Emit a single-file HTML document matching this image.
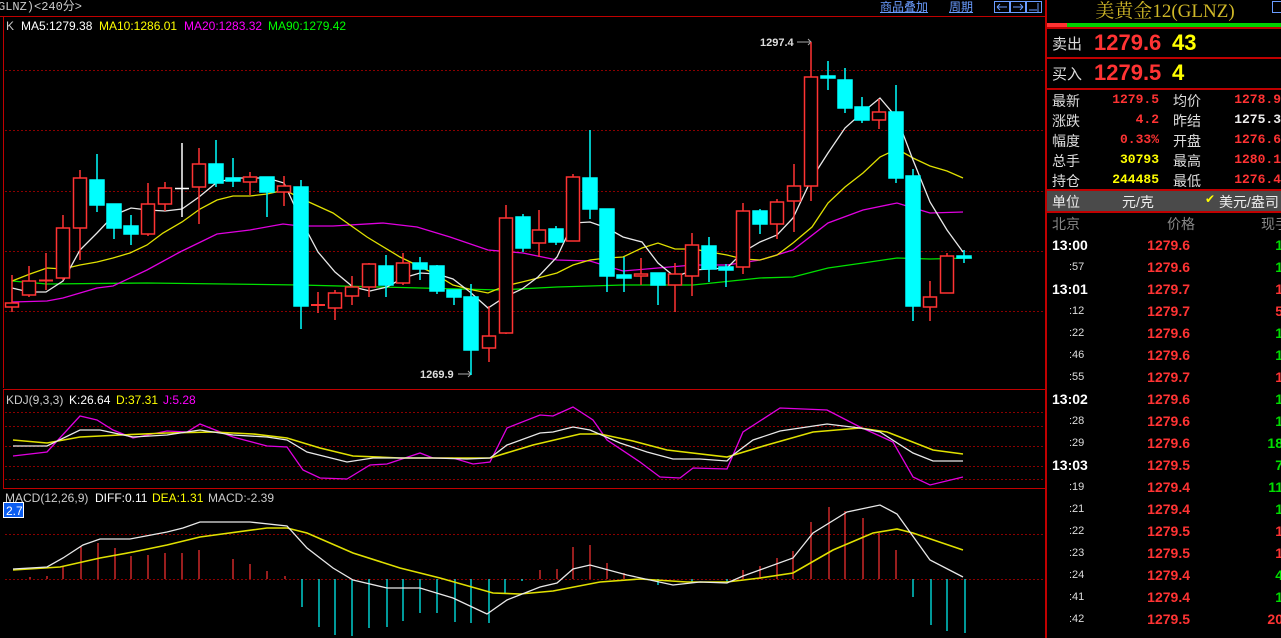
<!DOCTYPE html>
<html><head><meta charset="utf-8"><style>
html,body{margin:0;padding:0;background:#000;width:1281px;height:638px;overflow:hidden;font-family:"Liberation Sans","Noto Sans CJK SC",sans-serif}
.a{position:absolute;white-space:nowrap}
#rp{position:absolute;left:1045px;top:0;width:236px;height:638px;border-left:2px solid #c00000;box-sizing:border-box}
.hl{position:absolute;left:0;width:236px;height:2px;background:#c00000}
.lb{position:absolute;left:5px;color:#ddd;font-size:14px}
.v{position:absolute;text-align:right;font-family:"Liberation Mono",monospace;font-weight:bold;font-size:13px}
.tr{position:absolute;left:0;width:236px;height:22px}
</style></head><body>
<div class="a" style="left:-2px;top:0;color:#ccc;font-size:12px;line-height:15px;font-family:'Liberation Mono','Noto Sans CJK SC',monospace">GLNZ)&lt;240分&gt;</div>
<div class="a" style="left:880px;top:0;color:#6a9cff;font-size:12px;line-height:15px;text-decoration:underline">商品叠加</div>
<div class="a" style="left:949px;top:0;color:#6a9cff;font-size:12px;line-height:15px;text-decoration:underline">周期</div>
<svg class="a" style="left:994px;top:0" width="50" height="14">
<rect x="0.5" y="1.5" width="15" height="11" fill="none" stroke="#6a9cff"/><path d="M3 7h10M3 7l3-3M3 7l3 3" stroke="#6a9cff" fill="none"/>
<rect x="16.5" y="1.5" width="15" height="11" fill="none" stroke="#6a9cff"/><path d="M19 7h10M29 7l-3-3M29 7l-3 3" stroke="#6a9cff" fill="none"/>
<rect x="32.5" y="1.5" width="15" height="11" fill="none" stroke="#6a9cff"/><path d="M35 10h8M44 3v9" stroke="#6a9cff" fill="none"/>
</svg>
<svg class="a" style="left:0;top:0" width="1045" height="638" font-family="Liberation Sans, sans-serif" font-size="12">
<line x1="0" y1="16.5" x2="1045" y2="16.5" stroke="#c00000"/>
<line x1="3.5" y1="17" x2="3.5" y2="388" stroke="#c00000"/>
<g stroke="#8a0000" stroke-dasharray="2,2">
<line x1="5" y1="70.5" x2="1045" y2="70.5"/><line x1="5" y1="130.5" x2="1045" y2="130.5"/><line x1="5" y1="191.5" x2="1045" y2="191.5"/><line x1="5" y1="251.5" x2="1045" y2="251.5"/><line x1="5" y1="311.5" x2="1045" y2="311.5"/>
<line x1="5" y1="412.5" x2="1045" y2="412.5"/><line x1="5" y1="426.5" x2="1045" y2="426.5"/><line x1="5" y1="446.5" x2="1045" y2="446.5"/><line x1="5" y1="466.5" x2="1045" y2="466.5"/><line x1="5" y1="479.5" x2="1045" y2="479.5"/>
<line x1="5" y1="534.5" x2="1045" y2="534.5"/><line x1="5" y1="579.5" x2="1045" y2="579.5"/>
</g>
<rect x="3.5" y="389.5" width="1042" height="99" fill="none" stroke="#c00000"/>
<text x="6" y="30" fill="#ccc">K</text>
<text x="21" y="30" fill="#fff">MA5:1279.38</text>
<text x="99" y="30" fill="#ff0">MA10:1286.01</text>
<text x="184" y="30" fill="#f0f">MA20:1283.32</text>
<text x="268" y="30" fill="#0f0">MA90:1279.42</text>
<text x="6" y="404" fill="#ccc">KDJ(9,3,3)</text>
<text x="69" y="404" fill="#fff">K:26.64</text>
<text x="116" y="404" fill="#ff0">D:37.31</text>
<text x="163" y="404" fill="#f0f">J:5.28</text>
<text x="5" y="502" fill="#ccc">MACD(12,26,9)</text>
<text x="95" y="502" fill="#fff">DIFF:0.11</text>
<text x="152" y="502" fill="#ff0">DEA:1.31</text>
<text x="208" y="502" fill="#ccc">MACD:-2.39</text>
<rect x="3.5" y="502.5" width="20" height="15" fill="#0a5cf0" stroke="#fff"/>
<text x="6" y="515" fill="#fff">2.7</text>
<text x="760" y="46" fill="#ddd" font-weight="bold" font-size="11">1297.4</text><path d="M797 42h14M808 39l3 3-3 3" stroke="#aaa" fill="none"/>
<text x="420" y="378" fill="#ddd" font-weight="bold" font-size="11">1269.9</text><path d="M458 374h13M468 371l3 3-3 3" stroke="#aaa" fill="none"/>
<g stroke-width="1.3" fill="none">
<polyline stroke="#00e000" points="12,281 47,284 147,283 300,285 500,290 557,287 623,285 693,285 760,278 793,277 828,268 863,263 897,258 930,259 972,258"/>
<polyline stroke="#e000e0" points="12,302 47,301 63,298 97,288 113,286 147,270 180,252 217,234 250,230 283,224 300,226 333,226 383,223 417,227 450,237 488,250 523,253 557,260 590,261 623,271 658,268 693,265 727,265 760,260 793,250 828,223 863,210 897,203 930,213 963,212"/>
<polyline stroke="#e0e000" points="12,281 30,274 47,268 63,269 80,265 97,262 113,258 130,253 147,245 163,233 182,222 200,209 217,200 233,196 250,196 267,194 285,190 300,198 333,213 367,237 400,257 433,273 453,285 473,290 488,293 505,286 522,282 538,278 557,273 573,265 590,260 607,258 623,257 642,248 658,243 675,249 693,249 710,252 727,255 743,259 760,260 777,255 793,243 812,227 828,203 845,187 863,173 880,157 897,149 913,158 930,166 947,171 963,178"/>
<polyline stroke="#e8e8e8" points="12,288 29,292 46,292 63,281 80,250 97,233 114,215 131,208 148,210 165,211 182,209 199,197 216,183 233,178 250,178 267,178 284,183 301,220 318,252 335,272 353,287 370,291 387,287 403,278 420,273 437,274 453,279 470,292 488,308 505,297 522,289 538,277 557,257 573,223 590,222 607,228 623,237 642,242 658,263 675,277 693,270 710,269 727,268 743,252 760,242 777,235 793,218 812,178 828,153 845,128 863,112 880,98 897,118 913,160 930,202 947,230 963,252"/>
</g>
<g stroke="#ff3333" stroke-width="1.5" fill="#000">
<line x1="12" y1="275" x2="12" y2="312"/><rect x="5.5" y="303" width="13" height="4"/>
<line x1="29" y1="266" x2="29" y2="297"/><rect x="22.5" y="281" width="13" height="14"/>
<line x1="46" y1="253" x2="46" y2="290"/><line x1="39" y1="280.5" x2="53" y2="280.5" stroke-width="2"/>
<line x1="63" y1="215" x2="63" y2="280"/><rect x="56.5" y="228" width="13" height="50"/>
<line x1="80" y1="170" x2="80" y2="260"/><rect x="73.5" y="178" width="13" height="50"/>
<line x1="148" y1="183" x2="148" y2="236"/><rect x="141.5" y="204" width="13" height="30"/>
<line x1="165" y1="182" x2="165" y2="211"/><rect x="158.5" y="188" width="13" height="16"/>
<line x1="199" y1="148" x2="199" y2="224"/><rect x="192.5" y="164" width="13" height="23"/>
<line x1="250" y1="172" x2="250" y2="195"/><rect x="243.5" y="177" width="13" height="5"/>
<line x1="284" y1="176" x2="284" y2="206"/><rect x="277.5" y="186" width="13" height="6"/>
<line x1="318" y1="292" x2="318" y2="313"/><line x1="311" y1="305" x2="325" y2="305" stroke-width="2"/>
<line x1="335" y1="290" x2="335" y2="320"/><rect x="328.5" y="293" width="13" height="15"/>
<line x1="352" y1="276" x2="352" y2="305"/><rect x="345.5" y="287" width="13" height="9"/>
<line x1="369" y1="263" x2="369" y2="297"/><rect x="362.5" y="264" width="13" height="23"/>
<line x1="403" y1="253" x2="403" y2="285"/><rect x="396.5" y="263" width="13" height="20"/>
<line x1="489" y1="306" x2="489" y2="362"/><rect x="482.5" y="336" width="13" height="12"/>
<line x1="506" y1="205" x2="506" y2="334"/><rect x="499.5" y="218" width="13" height="115"/>
<line x1="539" y1="210" x2="539" y2="257"/><rect x="532.5" y="230" width="13" height="13"/>
<line x1="573" y1="174" x2="573" y2="241"/><rect x="566.5" y="177" width="13" height="64"/>
<line x1="641" y1="258" x2="641" y2="285"/><rect x="634.5" y="274" width="13" height="2"/>
<line x1="675" y1="263" x2="675" y2="312"/><rect x="668.5" y="274" width="13" height="11"/>
<line x1="692" y1="233" x2="692" y2="296"/><rect x="685.5" y="245" width="13" height="31"/>
<line x1="743" y1="203" x2="743" y2="274"/><rect x="736.5" y="211" width="13" height="56"/>
<line x1="777" y1="199" x2="777" y2="239"/><rect x="770.5" y="202" width="13" height="22"/>
<line x1="794" y1="164" x2="794" y2="232"/><rect x="787.5" y="186" width="13" height="15"/>
<line x1="811" y1="42" x2="811" y2="201"/><rect x="804.5" y="77" width="13" height="109"/>
<line x1="879" y1="99" x2="879" y2="129"/><rect x="872.5" y="112" width="13" height="8"/>
<line x1="930" y1="281" x2="930" y2="321"/><rect x="923.5" y="297" width="13" height="10"/>
<line x1="947" y1="253" x2="947" y2="293"/><rect x="940.5" y="256" width="13" height="37"/>
</g>
<g stroke="#fff" stroke-width="1.5"><line x1="182" y1="143" x2="182" y2="217"/><line x1="175" y1="188.5" x2="189" y2="188.5"/></g>
<g stroke="#00ffff" stroke-width="1.5" fill="#00ffff">
<line x1="97" y1="154" x2="97" y2="212"/><rect x="90" y="180" width="14" height="25"/>
<line x1="114" y1="204" x2="114" y2="239"/><rect x="107" y="204" width="14" height="24"/>
<line x1="131" y1="215" x2="131" y2="245"/><rect x="124" y="226" width="14" height="8"/>
<line x1="216" y1="140" x2="216" y2="187"/><rect x="209" y="164" width="14" height="19"/>
<line x1="233" y1="158" x2="233" y2="187"/><rect x="226" y="178" width="14" height="3"/>
<line x1="267" y1="177" x2="267" y2="217"/><rect x="260" y="177" width="14" height="15"/>
<line x1="301" y1="180" x2="301" y2="329"/><rect x="294" y="187" width="14" height="119"/>
<line x1="386" y1="255" x2="386" y2="297"/><rect x="379" y="266" width="14" height="19"/>
<line x1="420" y1="257" x2="420" y2="280"/><rect x="413" y="263" width="14" height="6"/>
<line x1="437" y1="265" x2="437" y2="294"/><rect x="430" y="266" width="14" height="25"/>
<line x1="454" y1="290" x2="454" y2="305"/><rect x="447" y="290" width="14" height="7"/>
<line x1="471" y1="284" x2="471" y2="375"/><rect x="464" y="297" width="14" height="53"/>
<line x1="523" y1="214" x2="523" y2="252"/><rect x="516" y="217" width="14" height="31"/>
<line x1="556" y1="226" x2="556" y2="245"/><rect x="549" y="229" width="14" height="13"/>
<line x1="590" y1="130" x2="590" y2="219"/><rect x="583" y="178" width="14" height="31"/>
<line x1="607" y1="209" x2="607" y2="292"/><rect x="600" y="209" width="14" height="67"/>
<line x1="624" y1="257" x2="624" y2="292"/><rect x="617" y="275" width="14" height="3"/>
<line x1="658" y1="273" x2="658" y2="305"/><rect x="651" y="273" width="14" height="12"/>
<line x1="709" y1="237" x2="709" y2="282"/><rect x="702" y="246" width="14" height="23"/>
<line x1="726" y1="264" x2="726" y2="287"/><rect x="719" y="267" width="14" height="3"/>
<line x1="760" y1="209" x2="760" y2="234"/><rect x="753" y="211" width="14" height="13"/>
<line x1="828" y1="61" x2="828" y2="90"/><rect x="821" y="76" width="14" height="2"/>
<line x1="845" y1="68" x2="845" y2="113"/><rect x="838" y="80" width="14" height="28"/>
<line x1="862" y1="97" x2="862" y2="123"/><rect x="855" y="107" width="14" height="13"/>
<line x1="896" y1="85" x2="896" y2="183"/><rect x="889" y="112" width="14" height="66"/>
<line x1="913" y1="169" x2="913" y2="321"/><rect x="906" y="176" width="14" height="130"/>
<line x1="964" y1="250" x2="964" y2="263"/><rect x="957" y="256" width="14" height="2"/>
</g>
<g stroke-width="1.3" fill="none">
<polyline stroke="#e000e0" points="13,456 47,452 80,416 97,420 113,430 133,438 167,431 187,432 200,424 233,437 267,446 287,447 303,470 320,478 347,479 370,465 387,464 420,453 433,458 453,458 473,464 490,462 507,428 540,415 553,416 573,407 593,420 607,440 640,462 660,477 680,478 693,468 727,469 743,432 780,408 827,410 860,427 893,442 913,477 930,485 963,477"/>
<polyline stroke="#e0e000" stroke-width="1.6" points="13,440 47,443 80,437 120,435 167,433 213,432 253,434 287,438 320,448 353,456 400,458 490,458 533,445 580,434 600,434 633,441 667,450 727,457 767,445 813,432 860,428 887,432 933,450 963,454"/>
<polyline stroke="#e8e8e8" points="13,446 47,446 80,430 100,430 133,437 167,435 200,430 233,435 267,437 287,440 307,452 347,462 373,458 407,458 433,458 467,459 490,458 507,445 540,433 553,432 573,427 590,430 620,443 647,452 673,459 700,459 727,461 733,455 753,440 780,431 827,424 860,428 880,432 913,453 933,461 963,461"/>
</g>
<g stroke-width="1.2">
<g stroke="#ff3333">
<line x1="30" y1="579" x2="30" y2="577"/><line x1="47" y1="579" x2="47" y2="576"/><line x1="63" y1="579" x2="63" y2="567"/><line x1="81" y1="579" x2="81" y2="547"/><line x1="98" y1="579" x2="98" y2="543"/><line x1="115" y1="579" x2="115" y2="548"/><line x1="131" y1="579" x2="131" y2="556"/><line x1="148" y1="579" x2="148" y2="555"/><line x1="165" y1="579" x2="165" y2="553"/><line x1="182" y1="579" x2="182" y2="553"/><line x1="199" y1="579" x2="199" y2="550"/><line x1="233" y1="579" x2="233" y2="559"/><line x1="250" y1="579" x2="250" y2="564"/><line x1="267" y1="579" x2="267" y2="571"/><line x1="285" y1="579" x2="285" y2="576"/>
<line x1="540" y1="579" x2="540" y2="570"/><line x1="557" y1="579" x2="557" y2="569"/><line x1="573" y1="579" x2="573" y2="547"/><line x1="590" y1="579" x2="590" y2="545"/><line x1="607" y1="579" x2="607" y2="563"/><line x1="624" y1="579" x2="624" y2="573"/>
<line x1="743" y1="579" x2="743" y2="570"/><line x1="760" y1="579" x2="760" y2="566"/><line x1="777" y1="579" x2="777" y2="558"/><line x1="793" y1="579" x2="793" y2="551"/><line x1="811" y1="579" x2="811" y2="522"/><line x1="829" y1="579" x2="829" y2="507"/><line x1="845" y1="579" x2="845" y2="511"/><line x1="863" y1="579" x2="863" y2="518"/><line x1="879" y1="579" x2="879" y2="533"/><line x1="896" y1="579" x2="896" y2="550"/>
</g>
<g stroke="#00ffff">
<line x1="302" y1="579" x2="302" y2="607"/><line x1="319" y1="579" x2="319" y2="627"/><line x1="335" y1="579" x2="335" y2="635"/><line x1="352" y1="579" x2="352" y2="636"/><line x1="369" y1="579" x2="369" y2="628"/><line x1="387" y1="579" x2="387" y2="627"/><line x1="403" y1="579" x2="403" y2="621"/><line x1="420" y1="579" x2="420" y2="613"/><line x1="437" y1="579" x2="437" y2="613"/><line x1="455" y1="579" x2="455" y2="622"/><line x1="471" y1="579" x2="471" y2="623"/><line x1="489" y1="579" x2="489" y2="623"/><line x1="505" y1="579" x2="505" y2="594"/><line x1="522" y1="579" x2="522" y2="581"/>
<line x1="658" y1="579" x2="658" y2="585"/><line x1="692" y1="579" x2="692" y2="582"/><line x1="727" y1="579" x2="727" y2="582"/>
<line x1="913" y1="579" x2="913" y2="597"/><line x1="931" y1="579" x2="931" y2="625"/><line x1="947" y1="579" x2="947" y2="631"/><line x1="965" y1="579" x2="965" y2="633"/>
</g>
</g>
<g stroke-width="1.3" fill="none">
<polyline stroke="#e0e000" stroke-width="1.6" points="13,570 60,567 100,558 133,552 167,545 200,537 267,528 287,528 307,533 353,553 400,568 440,578 493,593 520,594 553,591 600,582 640,579 687,582 727,582 760,578 793,573 833,550 873,533 897,529 913,533 963,550"/>
<polyline stroke="#e8e8e8" points="13,569 47,567 63,558 83,545 100,539 130,539 167,532 183,528 200,522 250,522 287,526 307,548 333,568 353,580 387,588 420,588 453,598 487,614 507,600 540,587 557,583 573,569 590,565 627,575 673,585 700,582 727,583 743,576 793,558 813,533 847,512 880,505 897,514 930,560 963,577"/>
</g>
</svg>

<div id="rp">
<div class="a" style="left:0;top:-4px;width:236px;text-align:center;color:#d0b828;font-size:19px;font-family:'Liberation Serif','Noto Serif CJK SC',serif">美黄金12(GLNZ)</div>
<div class="a" style="left:225px;top:1px;width:14px;height:10px;border:1px solid #6a9cff"></div>
<div class="a" style="left:0;top:23px;width:20px;height:4px;background:#ff3333"></div>
<div class="a" style="left:20px;top:23px;width:216px;height:4px;background:#00d000"></div>
<div class="hl" style="top:27px"></div>
<div class="lb" style="top:33px;font-size:15px">卖出</div>
<div class="a" style="left:47px;top:30px;color:#ff3333;font-size:22px;font-weight:bold">1279.6</div>
<div class="a" style="left:125px;top:30px;color:#ffff00;font-size:22px;font-weight:bold">43</div>
<div class="hl" style="top:57px"></div>
<div class="lb" style="top:63px;font-size:15px">买入</div>
<div class="a" style="left:47px;top:60px;color:#ff3333;font-size:22px;font-weight:bold">1279.5</div>
<div class="a" style="left:125px;top:60px;color:#ffff00;font-size:22px;font-weight:bold">4</div>
<div class="hl" style="top:88px"></div>
<div class="lb" style="top:91px">最新</div><div class="v" style="right:122px;top:92px;color:#ff3333">1279.5</div>
<div class="lb" style="left:126px;top:91px">均价</div><div class="v" style="right:0;top:92px;color:#ff3333">1278.9</div>
<div class="lb" style="top:111px">涨跌</div><div class="v" style="right:122px;top:112px;color:#ff3333">4.2</div>
<div class="lb" style="left:126px;top:111px">昨结</div><div class="v" style="right:0;top:112px;color:#eee">1275.3</div>
<div class="lb" style="top:131px">幅度</div><div class="v" style="right:122px;top:132px;color:#ff3333">0.33%</div>
<div class="lb" style="left:126px;top:131px">开盘</div><div class="v" style="right:0;top:132px;color:#ff3333">1276.6</div>
<div class="lb" style="top:151px">总手</div><div class="v" style="right:122px;top:152px;color:#ffff00">30793</div>
<div class="lb" style="left:126px;top:151px">最高</div><div class="v" style="right:0;top:152px;color:#ff3333">1280.1</div>
<div class="lb" style="top:171px">持仓</div><div class="v" style="right:122px;top:172px;color:#ffff00">244485</div>
<div class="lb" style="left:126px;top:171px">最低</div><div class="v" style="right:0;top:172px;color:#ff3333">1276.4</div>
<div class="hl" style="top:189px"></div>
<div class="a" style="left:0;top:191px;width:236px;height:20px;background:#4a4a4a"></div>
<div class="lb" style="top:192px;color:#eee">单位</div>
<div class="a" style="left:75px;top:192px;color:#eee;font-size:14px">元/克</div>
<div class="a" style="left:158px;top:192px;color:#ffff00;font-size:12px">✔</div>
<div class="a" style="left:172px;top:192px;color:#eee;font-size:14px">美元/盎司</div>
<div class="hl" style="top:211px"></div>
<div class="lb" style="top:214px;color:#888">北京</div>
<div class="a" style="left:120px;top:214px;color:#888;font-size:14px">价格</div>
<div class="a" style="left:214px;top:214px;color:#888;font-size:14px">现手</div>
<div id="tl" style="position:absolute;left:0;top:234px;width:236px;font-family:'Liberation Sans',sans-serif;font-weight:bold">
<div class="tr" style="top:0"><span class="a" style="left:5px;top:3px;color:#fff;font-size:14px">13:00</span><span class="a" style="right:93px;top:3px;color:#ff3333;font-size:14px">1279.6</span><span class="a" style="right:0;top:3px;color:#00dd00;font-size:14px">1</span></div>
<div class="tr" style="top:22px"><span class="a" style="left:22px;top:5px;color:#ddd;font-size:11px;font-weight:normal">:57</span><span class="a" style="right:93px;top:3px;color:#ff3333;font-size:14px">1279.6</span><span class="a" style="right:0;top:3px;color:#00dd00;font-size:14px">1</span></div>
<div class="tr" style="top:44px"><span class="a" style="left:5px;top:3px;color:#fff;font-size:14px">13:01</span><span class="a" style="right:93px;top:3px;color:#ff3333;font-size:14px">1279.7</span><span class="a" style="right:0;top:3px;color:#ff3333;font-size:14px">1</span></div>
<div class="tr" style="top:66px"><span class="a" style="left:22px;top:5px;color:#ddd;font-size:11px;font-weight:normal">:12</span><span class="a" style="right:93px;top:3px;color:#ff3333;font-size:14px">1279.7</span><span class="a" style="right:0;top:3px;color:#ff3333;font-size:14px">5</span></div>
<div class="tr" style="top:88px"><span class="a" style="left:22px;top:5px;color:#ddd;font-size:11px;font-weight:normal">:22</span><span class="a" style="right:93px;top:3px;color:#ff3333;font-size:14px">1279.6</span><span class="a" style="right:0;top:3px;color:#00dd00;font-size:14px">1</span></div>
<div class="tr" style="top:110px"><span class="a" style="left:22px;top:5px;color:#ddd;font-size:11px;font-weight:normal">:46</span><span class="a" style="right:93px;top:3px;color:#ff3333;font-size:14px">1279.6</span><span class="a" style="right:0;top:3px;color:#00dd00;font-size:14px">1</span></div>
<div class="tr" style="top:132px"><span class="a" style="left:22px;top:5px;color:#ddd;font-size:11px;font-weight:normal">:55</span><span class="a" style="right:93px;top:3px;color:#ff3333;font-size:14px">1279.7</span><span class="a" style="right:0;top:3px;color:#ff3333;font-size:14px">1</span></div>
<div class="tr" style="top:154px"><span class="a" style="left:5px;top:3px;color:#fff;font-size:14px">13:02</span><span class="a" style="right:93px;top:3px;color:#ff3333;font-size:14px">1279.6</span><span class="a" style="right:0;top:3px;color:#00dd00;font-size:14px">1</span></div>
<div class="tr" style="top:176px"><span class="a" style="left:22px;top:5px;color:#ddd;font-size:11px;font-weight:normal">:28</span><span class="a" style="right:93px;top:3px;color:#ff3333;font-size:14px">1279.6</span><span class="a" style="right:0;top:3px;color:#00dd00;font-size:14px">1</span></div>
<div class="tr" style="top:198px"><span class="a" style="left:22px;top:5px;color:#ddd;font-size:11px;font-weight:normal">:29</span><span class="a" style="right:93px;top:3px;color:#ff3333;font-size:14px">1279.6</span><span class="a" style="right:0;top:3px;color:#00dd00;font-size:14px">18</span></div>
<div class="tr" style="top:220px"><span class="a" style="left:5px;top:3px;color:#fff;font-size:14px">13:03</span><span class="a" style="right:93px;top:3px;color:#ff3333;font-size:14px">1279.5</span><span class="a" style="right:0;top:3px;color:#00dd00;font-size:14px">7</span></div>
<div class="tr" style="top:242px"><span class="a" style="left:22px;top:5px;color:#ddd;font-size:11px;font-weight:normal">:19</span><span class="a" style="right:93px;top:3px;color:#ff3333;font-size:14px">1279.4</span><span class="a" style="right:0;top:3px;color:#00dd00;font-size:14px">11</span></div>
<div class="tr" style="top:264px"><span class="a" style="left:22px;top:5px;color:#ddd;font-size:11px;font-weight:normal">:21</span><span class="a" style="right:93px;top:3px;color:#ff3333;font-size:14px">1279.4</span><span class="a" style="right:0;top:3px;color:#00dd00;font-size:14px">1</span></div>
<div class="tr" style="top:286px"><span class="a" style="left:22px;top:5px;color:#ddd;font-size:11px;font-weight:normal">:22</span><span class="a" style="right:93px;top:3px;color:#ff3333;font-size:14px">1279.5</span><span class="a" style="right:0;top:3px;color:#ff3333;font-size:14px">1</span></div>
<div class="tr" style="top:308px"><span class="a" style="left:22px;top:5px;color:#ddd;font-size:11px;font-weight:normal">:23</span><span class="a" style="right:93px;top:3px;color:#ff3333;font-size:14px">1279.5</span><span class="a" style="right:0;top:3px;color:#ff3333;font-size:14px">1</span></div>
<div class="tr" style="top:330px"><span class="a" style="left:22px;top:5px;color:#ddd;font-size:11px;font-weight:normal">:24</span><span class="a" style="right:93px;top:3px;color:#ff3333;font-size:14px">1279.4</span><span class="a" style="right:0;top:3px;color:#00dd00;font-size:14px">4</span></div>
<div class="tr" style="top:352px"><span class="a" style="left:22px;top:5px;color:#ddd;font-size:11px;font-weight:normal">:41</span><span class="a" style="right:93px;top:3px;color:#ff3333;font-size:14px">1279.4</span><span class="a" style="right:0;top:3px;color:#00dd00;font-size:14px">1</span></div>
<div class="tr" style="top:374px"><span class="a" style="left:22px;top:5px;color:#ddd;font-size:11px;font-weight:normal">:42</span><span class="a" style="right:93px;top:3px;color:#ff3333;font-size:14px">1279.5</span><span class="a" style="right:0;top:3px;color:#ff3333;font-size:14px">20</span></div>
</div>
</div>
</body></html>
